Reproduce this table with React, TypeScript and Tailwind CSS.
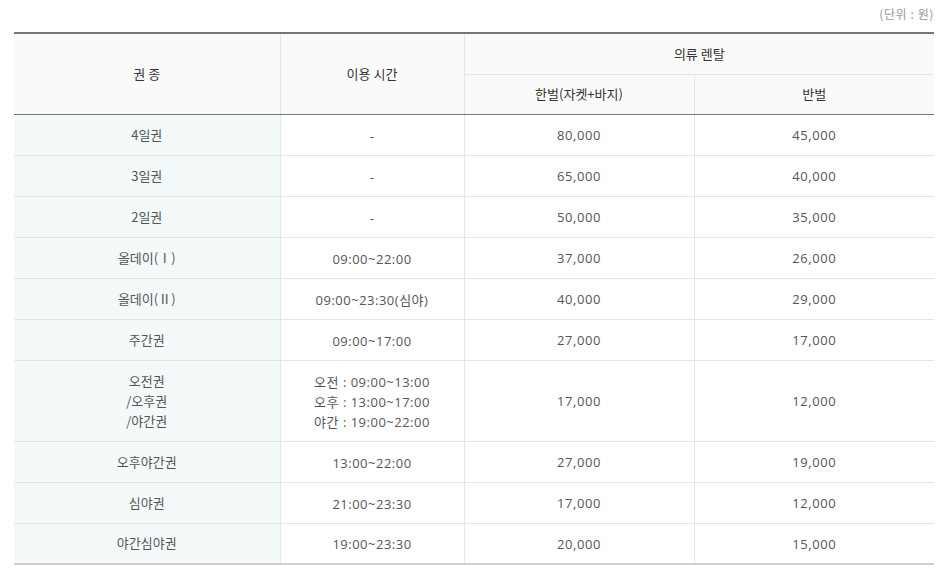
import React from 'react';

const rows: { name: string[]; time: string[]; full: string; half: string }[] = [
  { name: ['4일권'], time: ['-'], full: '80,000', half: '45,000' },
  { name: ['3일권'], time: ['-'], full: '65,000', half: '40,000' },
  { name: ['2일권'], time: ['-'], full: '50,000', half: '35,000' },
  { name: ['올데이(Ⅰ)'], time: ['09:00~22:00'], full: '37,000', half: '26,000' },
  { name: ['올데이(Ⅱ)'], time: ['09:00~23:30(심야)'], full: '40,000', half: '29,000' },
  { name: ['주간권'], time: ['09:00~17:00'], full: '27,000', half: '17,000' },
  {
    name: ['오전권', '/오후권', '/야간권'],
    time: ['오전 : 09:00~13:00', '오후 : 13:00~17:00', '야간 : 19:00~22:00'],
    full: '17,000',
    half: '12,000',
  },
  { name: ['오후야간권'], time: ['13:00~22:00'], full: '27,000', half: '19,000' },
  { name: ['심야권'], time: ['21:00~23:30'], full: '17,000', half: '12,000' },
  { name: ['야간심야권'], time: ['19:00~23:30'], full: '20,000', half: '15,000' },
];

const num = { fontFamily: '"Open Sans", "Noto Sans CJK KR", sans-serif' };

export default function App() {
  return (
    <div
      className="w-[944px] h-[576px] bg-white pl-[14px] pr-[10px] overflow-hidden"
      style={{ fontFamily: '"Noto Sans CJK KR", "Noto Sans", sans-serif' }}
    >
      <div className="pt-[5px] h-[32px] text-right text-[12px] leading-[18px] text-[#999] tracking-[0.6px]">
        (단위 : 원)
      </div>
      <table className="w-[920px] table-fixed border-collapse border-t-2 border-t-[#777] border-b-2 border-b-[#d0d0d0] text-[13px] text-center">
        <colgroup>
          <col className="w-[266px]" />
          <col className="w-[184px]" />
          <col className="w-[230px]" />
          <col className="w-[240px]" />
        </colgroup>
        <thead className="bg-[#fafafa] text-[#333]">
          <tr className="h-[41px]">
            <th rowSpan={2} className="font-normal border-r border-[#e5e5e5] border-b border-b-[#777]">
              권 종
            </th>
            <th rowSpan={2} className="font-normal border-r border-[#e5e5e5] border-b border-b-[#777]">
              이용 시간
            </th>
            <th colSpan={2} className="font-normal border-b border-[#e5e5e5]">
              의류 렌탈
            </th>
          </tr>
          <tr className="h-[40px]">
            <th className="font-normal border-r border-[#e5e5e5] border-b border-b-[#777]">한벌(자켓+바지)</th>
            <th className="font-normal border-b border-b-[#777]">반벌</th>
          </tr>
        </thead>
        <tbody className="text-[#555]">
          {rows.map((r, i) => (
            <tr
              key={i}
              className={
                (r.name.length > 1 ? 'h-[81px]' : 'h-[41px]') +
                (i < rows.length - 1 ? ' border-b border-[#e5e5e5]' : '')
              }
            >
              <td className="bg-[#f3faf9] border-r border-[#e5e5e5] leading-[20px]">
                {r.name.map((n) => (
                  <div key={n}>{n}</div>
                ))}
              </td>
              <td className="border-r border-[#e5e5e5] leading-[20px] tracking-[0.5px] pt-[2px]" style={num}>
                {r.time.map((t) => (
                  <div key={t}>{t}</div>
                ))}
              </td>
              <td className="border-r border-[#e5e5e5] tracking-[0.6px] pt-[2px]" style={num}>
                {r.full}
              </td>
              <td className="tracking-[0.6px] pt-[2px]" style={num}>
                {r.half}
              </td>
            </tr>
          ))}
        </tbody>
      </table>
    </div>
  );
}
